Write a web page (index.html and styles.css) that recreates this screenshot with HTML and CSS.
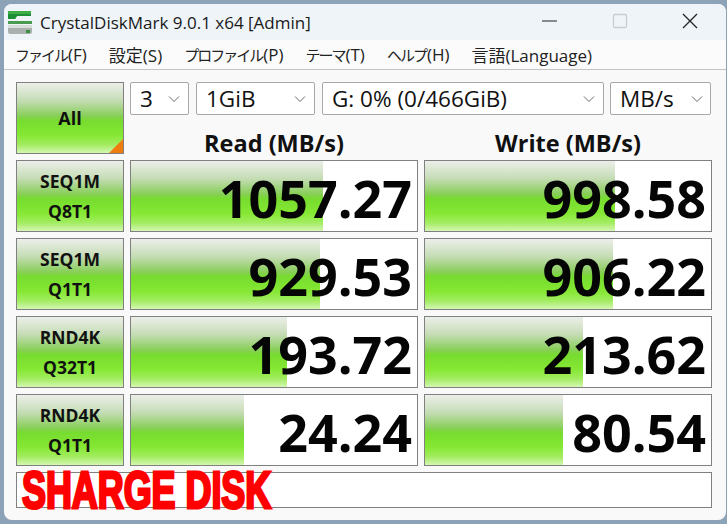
FILE: index.html
```html
<!DOCTYPE html>
<html lang="ja">
<head>
<meta charset="utf-8">
<title>CrystalDiskMark</title>
<link rel="stylesheet" href="styles.css">
</head>
<body>
<div class="window">
  <header class="titlebar">
    <svg class="app-icon" width="26" height="26" viewBox="0 0 26 26">
      <path d="M1 1h23v5H10l-2 3H1z" fill="#3fae45"/>
      <path d="M1 4h23v2H10l-2 3H1z" fill="#1f8f35"/>
      <path d="M1 11h24v3H1z" fill="#4a9a50"/>
      <path d="M1 16h24v6a2 2 0 0 1-2 2H3a2 2 0 0 1-2-2z" fill="#a9b0ae"/>
      <path d="M1 15h24v3H1z" fill="#d9dddc"/>
      <rect x="19" y="20" width="4" height="3" fill="#3c8f45"/>
    </svg>
    <span class="title">CrystalDiskMark 9.0.1 x64 [Admin]</span>
    <div class="controls">
      <svg width="16" height="16" viewBox="0 0 16 16"><path d="M0 8h15" stroke="#222" stroke-width="1.2" fill="none"/></svg>
      <svg width="16" height="16" viewBox="0 0 16 16"><rect x="1.5" y="1.5" width="13" height="13" rx="1.5" stroke="#c8cccf" stroke-width="1.3" fill="none"/></svg>
      <svg width="16" height="16" viewBox="0 0 16 16"><path d="M1 1l14 14M15 1L1 15" stroke="#222" stroke-width="1.3" fill="none"/></svg>
    </div>
  </header>
  <nav class="menu">
    <span><b class="kana">ファイル</b>(F)</span><span>設定(S)</span><span><b class="kana">プロファイル</b>(P)</span><span><b class="kana">テーマ</b>(T)</span><span><b class="kana">ヘルプ</b>(H)</span><span>言語(Language)</span>
  </nav>
  <main class="panel">
    <div class="top">
      <button class="label all">All<i class="corner"></i></button>
      <div class="top-right">
        <div class="selects">
          <div class="select s1"><span>3</span><svg class="chev" width="12" height="8" viewBox="0 0 12 8"><path d="M1 1.5l5 5 5-5" stroke="#666" fill="none"/></svg></div>
          <div class="select s2"><span>1GiB</span><svg class="chev" width="12" height="8" viewBox="0 0 12 8"><path d="M1 1.5l5 5 5-5" stroke="#666" fill="none"/></svg></div>
          <div class="select s3"><span>G: 0% (0/466GiB)</span><svg class="chev" width="12" height="8" viewBox="0 0 12 8"><path d="M1 1.5l5 5 5-5" stroke="#666" fill="none"/></svg></div>
          <div class="select s4"><span>MB/s</span><svg class="chev" width="12" height="8" viewBox="0 0 12 8"><path d="M1 1.5l5 5 5-5" stroke="#666" fill="none"/></svg></div>
        </div>
        <div class="heads"><div>Read (MB/s)</div><div>Write (MB/s)</div></div>
      </div>
    </div>
    <div class="row">
      <div class="label"><span>SEQ1M</span><span>Q8T1</span></div>
      <div class="cell"><div class="bar" style="width:192px"></div><span class="val">1057.27</span></div>
      <div class="cell"><div class="bar" style="width:190px"></div><span class="val">998.58</span></div>
    </div>
    <div class="row">
      <div class="label"><span>SEQ1M</span><span>Q1T1</span></div>
      <div class="cell"><div class="bar" style="width:189px"></div><span class="val">929.53</span></div>
      <div class="cell"><div class="bar" style="width:188px"></div><span class="val">906.22</span></div>
    </div>
    <div class="row">
      <div class="label"><span>RND4K</span><span>Q32T1</span></div>
      <div class="cell"><div class="bar" style="width:156px"></div><span class="val">193.72</span></div>
      <div class="cell"><div class="bar" style="width:158px"></div><span class="val">213.62</span></div>
    </div>
    <div class="row">
      <div class="label"><span>RND4K</span><span>Q1T1</span></div>
      <div class="cell"><div class="bar" style="width:113px"></div><span class="val">24.24</span></div>
      <div class="cell"><div class="bar" style="width:138px"></div><span class="val">80.54</span></div>
    </div>
    <div class="banner"><span class="brand">SHARGE DISK</span></div>
  </main>
</div>
</body>
</html>
```
FILE: styles.css
```css
* { box-sizing: border-box; }
html, body { height: 100%; }
body {
  margin: 0;
  padding: 4px 1px 4px 4px;
  background: #8ca2b6;
  font-family: "Open Sans", "Noto Sans CJK JP", sans-serif;
  color: #111;
  overflow: hidden;
}
.window {
  height: 516px;
  background: #f9f9f9;
  border-radius: 8px;
  overflow: hidden;
  display: flex;
  flex-direction: column;
}
.titlebar {
  height: 36px;
  flex: none;
  background: #eef4f8;
  display: flex;
  align-items: center;
  padding-left: 3px;
}
.app-icon { flex: none; margin-top: 1px; }
.title { margin-left: 7px; font-size: 17px; color: #1a1a1a; white-space: nowrap; }
.controls {
  margin-left: auto;
  margin-top: -2px;
  display: flex;
  align-items: center;
  gap: 54px;
  padding-right: 28px;
}
.menu {
  height: 30px;
  flex: none;
  background: #fbfbfb;
  border-bottom: 1px solid #c4c4c4;
  display: flex;
  align-items: center;
  gap: 22px;
  padding-left: 11px;
  font-size: 17px;
  white-space: nowrap;
  color: #222;
}
.kana { font-weight: 400; font-size: 15px; letter-spacing: -2px; margin-right: 1px; }
.panel {
  flex: 1;
  padding: 12px 0 0 12px;
  display: flex;
  flex-direction: column;
  gap: 6px;
}
.top { display: flex; gap: 6px; height: 72px; }
.label {
  position: relative;
  width: 108px;
  height: 72px;
  flex: none;
  margin: 0;
  padding: 0;
  border: 1px solid #808080;
  background: linear-gradient(#ecefe9 0%, #c5dcb5 25%, #88cf58 47%, #76dc2e 54%, #86e834 75%, #a2ec60 88%, #d4f6b2 100%);
  display: flex;
  flex-direction: column;
  align-items: center;
  justify-content: center;
  gap: 8px;
  font: 700 17.5px/22px "Open Sans", sans-serif;
  color: #111;
}
.all { font-size: 18px; }
.corner {
  position: absolute;
  right: 0;
  bottom: 0;
  width: 0;
  height: 0;
  border-style: solid;
  border-width: 0 0 14px 14px;
  border-color: transparent transparent #f07c10 transparent;
}
.top-right { flex: none; width: 582px; display: flex; flex-direction: column; }
.selects { display: flex; gap: 7px; height: 35px; }
.select {
  background: #fff;
  border: 1px solid #a8a8a8;
  border-radius: 2px;
  display: flex;
  align-items: center;
  justify-content: space-between;
  padding: 0 8px 0 9px;
  font-size: 22.5px;
  color: #111;
  white-space: nowrap;
}
.s1 { width: 59px; }
.s2 { width: 119px; }
.s3 { width: 282px; }
.s4 { width: 101px; margin-left: -1px; padding-right: 7px; }
.chev { flex: none; }
.heads { display: flex; gap: 6px; flex: 1; align-items: flex-start; }
.heads div {
  width: 288px;
  text-align: center;
  font-weight: 700;
  font-size: 23.5px;
  line-height: 30px;
  margin-top: 13px;
}
.row { display: flex; gap: 6px; height: 72px; }
.cell {
  position: relative;
  width: 288px;
  height: 72px;
  flex: none;
  background: #fff;
  border: 1px solid #808080;
  display: flex;
  align-items: center;
  justify-content: flex-end;
  padding-right: 5px;
}
.bar {
  position: absolute;
  left: 0;
  top: 0;
  bottom: 0;
  background: linear-gradient(#ecefe9 0%, #c5dcb5 25%, #88cf58 47%, #76dc2e 54%, #86e834 75%, #a2ec60 88%, #d4f6b2 100%);
}
.val {
  position: relative;
  font-weight: 700;
  font-size: 52px;
  line-height: 60px;
  margin-top: 3px;
  color: #050505;
}
.banner {
  width: 696px;
  height: 36px;
  background: #fff;
  border: 1px solid #808080;
  display: flex;
  align-items: center;
  padding-left: 5px;
}
.brand {
  display: inline-block;
  font-family: "Liberation Sans", sans-serif;
  font-weight: 700;
  font-size: 52px;
  line-height: 36px;
  color: #f00;
  -webkit-text-stroke: 3px #f00;
  white-space: nowrap;
  transform: scaleX(0.69);
  transform-origin: left center;
}
```
